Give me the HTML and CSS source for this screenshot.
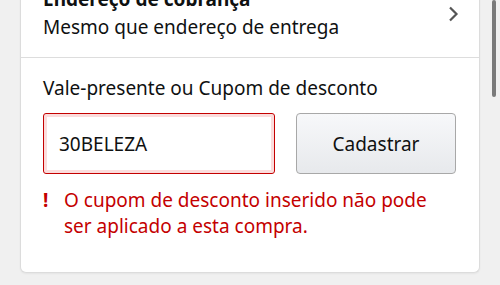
FILE: index.html
```html
<!DOCTYPE html>
<html lang="pt-BR">
<head>
<meta charset="utf-8">
<link rel="stylesheet" href="styles.css">
</head>
<body>
<div class="page">
  <div class="card">
    <div class="section row">
      <div class="info">
        <div class="title">Endereço de cobrança</div>
        <div class="desc">Mesmo que endereço de entrega</div>
      </div>
      <svg class="chevron" width="12" height="16" viewBox="0 0 12 16"><path d="M3 1.5 L9.5 8 L3 14.5" fill="none" stroke="#555" stroke-width="2.2"/></svg>
    </div>
    <div class="section coupon">
      <div class="label">Vale-presente ou Cupom de desconto</div>
      <div class="form">
        <div class="input">30BELEZA</div>
        <button class="btn">Cadastrar</button>
      </div>
      <div class="error">
        <span class="bang">!</span>
        <span class="msg">O cupom de desconto inserido não pode ser aplicado a esta compra.</span>
      </div>
    </div>
  </div>
</div>
<div class="scrollthumb"></div>
</body>
</html>
```
FILE: styles.css
```css
html, body {
  margin: 0;
  padding: 0;
  height: 100%;
  overflow: hidden;
}
body {
  background: #f0f0f0;
  font-family: "Noto Sans", "Open Sans", sans-serif;
  color: #0f1111;
  font-size: 19px;
  line-height: 28px;
}
.page {
  padding: 0 20px;
}
.card {
  margin-top: -15px;
  background: #fff;
  border: 1px solid #dcdcdc;
  border-top: none;
  border-radius: 0 0 6px 6px;
  box-shadow: 0 1px 2px rgba(0,0,0,0.05);
}
.section {
  padding: 0 22px;
}
.row {
  display: flex;
  align-items: center;
  justify-content: space-between;
  padding-bottom: 16px;
  border-bottom: 1px solid #dddddd;
}
.title {
  font-weight: 700;
}
.chevron {
  margin-right: -2px;
  margin-top: 2px;
}
.coupon {
  padding-top: 16px;
  padding-bottom: 33px;
}
.form {
  display: flex;
  gap: 21px;
  margin-top: 11px;
  margin-right: 1px;
}
.input {
  flex: 0 0 232px;
  box-sizing: border-box;
  height: 61px;
  border: 1px solid #c40000;
  border-radius: 3px;
  box-shadow: inset 0 0 0 3px #fbdcdc;
  padding: 0 15px;
  display: flex;
  align-items: center;
}
.btn {
  flex: 1;
  height: 61px;
  box-sizing: border-box;
  border: 1px solid #a8a8a8;
  border-radius: 4px;
  background: linear-gradient(#f7f8fa, #e7e9ec);
  font: inherit;
  color: #0f1111;
  padding: 0;
}
.error {
  display: flex;
  margin-top: 13px;
  line-height: 26px;
  color: #c40000;
}
.bang {
  font-weight: 700;
  width: 21px;
  flex: 0 0 21px;
}
.msg {
  max-width: 375px;
}
.scrollthumb {
  position: absolute;
  left: 492px;
  top: 0;
  width: 4px;
  height: 97px;
  background: #7a7a7a;
  border-radius: 2px;
}
```
